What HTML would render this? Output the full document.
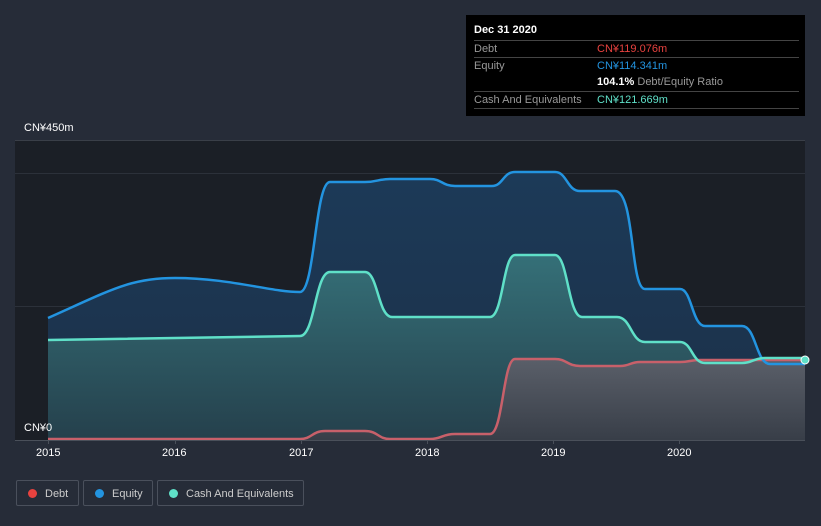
<!DOCTYPE html>
<html><head><meta charset="utf-8"><style>
body{margin:0;background:#262c38;font-family:"Liberation Sans","Noto Sans CJK SC",sans-serif;}
.wrap{position:relative;width:821px;height:526px;overflow:hidden;background:#262c38}
.tip{position:absolute;left:466px;top:15px;width:339px;height:101px;background:#000;color:#fff;font-size:11px}
.tip .r{position:absolute;left:8px;right:6px;border-top:1px solid #444;height:17px;line-height:17px}
.lbl{color:#999}
.v{position:absolute;left:123px;top:0;white-space:nowrap}
.leg{position:absolute;top:480px;height:26px;border:1px solid #4a505c;border-radius:2px;color:#ccc;font-size:11px;line-height:26px;box-sizing:border-box;white-space:nowrap}
.leg i{position:absolute;left:11px;top:8px;width:9px;height:9px;border-radius:50%}
.leg span{position:absolute;left:28px}
.ax{position:absolute;color:#fff;font-size:11px}
</style></head><body><div class="wrap">
<svg width="821" height="526" style="position:absolute;left:0;top:0">
<defs>
<linearGradient id="cg" x1="0" y1="0" x2="0" y2="1"><stop offset="0" stop-color="#357078"/><stop offset="1" stop-color="#25404c"/></linearGradient>
<linearGradient id="dg" x1="0" y1="0" x2="0" y2="1"><stop offset="0" stop-color="#5a5f69"/><stop offset="1" stop-color="#383e48"/></linearGradient>
<linearGradient id="eg" x1="0" y1="0" x2="0" y2="1"><stop offset="0" stop-color="#1c3a58"/><stop offset="1" stop-color="#1c3048"/></linearGradient>
</defs>
<rect x="15" y="140" width="790" height="300" fill="#1b1f26"/>
<line x1="15" y1="140.5" x2="805" y2="140.5" stroke="#3a3f48"/>
<line x1="15" y1="173.5" x2="805" y2="173.5" stroke="#2c313a"/>
<line x1="15" y1="306.5" x2="805" y2="306.5" stroke="#2c313a"/>
<path d="M48,318 C111,290 130,278 175,278 C230,278 270,292 300,292 C315,292 315,182 330,182 L365,182 C378,182 378,179 390,179 L430,179 C442,179 442,186 455,186 L492,186 C503,186 503,172 515,172 L555,172 C567,172 567,191 580,191 L615,191 C635,191 630,289 645,289 L680,289 C692,289 692,326 705,326 L742,326 C756,326 756,364 770,364 L805,364 L805,440 L48,440Z" fill="url(#eg)"/>
<path d="M48,340 L300,336 C315,336 315,272 330,272 L365,272 C378,272 378,317 392,317 L490,317 C503,317 503,255 515,255 L555,255 C568,255 568,317 582,317 L617,317 C631,317 631,342 645,342 L680,342 C692,342 692,363 705,363 L742,363 C753,363 753,358 765,358 L805,358 L805,440 L48,440Z" fill="url(#cg)"/>
<path d="M48,439 L300,439 C312,439 312,431 325,431 L365,431 C378,431 378,439 390,439 L430,439 C442,439 442,434 455,434 L490,434 C503,434 503,359 515,359 L555,359 C567,359 567,366 580,366 L620,366 C630,366 630,362 640,362 L680,362 C690,362 690,360 700,360 L805,360 L805,440 L48,440Z" fill="url(#dg)"/>
<path d="M48,439 L300,439 C312,439 312,431 325,431 L365,431 C378,431 378,439 390,439 L430,439 C442,439 442,434 455,434 L490,434 C503,434 503,359 515,359 L555,359 C567,359 567,366 580,366 L620,366 C630,366 630,362 640,362 L680,362 C690,362 690,360 700,360 L805,360" fill="none" stroke="#c8606a" stroke-width="2.5"/>
<path d="M48,318 C111,290 130,278 175,278 C230,278 270,292 300,292 C315,292 315,182 330,182 L365,182 C378,182 378,179 390,179 L430,179 C442,179 442,186 455,186 L492,186 C503,186 503,172 515,172 L555,172 C567,172 567,191 580,191 L615,191 C635,191 630,289 645,289 L680,289 C692,289 692,326 705,326 L742,326 C756,326 756,364 770,364 L805,364" fill="none" stroke="#2394e0" stroke-width="2.5"/>
<path d="M48,340 L300,336 C315,336 315,272 330,272 L365,272 C378,272 378,317 392,317 L490,317 C503,317 503,255 515,255 L555,255 C568,255 568,317 582,317 L617,317 C631,317 631,342 645,342 L680,342 C692,342 692,363 705,363 L742,363 C753,363 753,358 765,358 L805,358" fill="none" stroke="#5fe0c8" stroke-width="2.5"/>
<circle cx="805" cy="360" r="4" fill="#5fe0c8" stroke="#fff" stroke-width="1"/>
<line x1="15" y1="440.5" x2="805" y2="440.5" stroke="#4a505a"/>
<g stroke="#4a505a"><line x1="48.5" y1="440" x2="48.5" y2="444"/><line x1="175.5" y1="440" x2="175.5" y2="444"/><line x1="301.5" y1="440" x2="301.5" y2="444"/><line x1="427.5" y1="440" x2="427.5" y2="444"/><line x1="553.5" y1="440" x2="553.5" y2="444"/><line x1="679.5" y1="440" x2="679.5" y2="444"/></g>
</svg>
<div class="ax" style="left:24px;top:122px">CN¥450m</div>
<div class="ax" style="left:24px;top:422px">CN¥0</div>
<div class="ax" style="left:36px;top:447px">2015</div>
<div class="ax" style="left:162px;top:447px">2016</div>
<div class="ax" style="left:289px;top:447px">2017</div>
<div class="ax" style="left:415px;top:447px">2018</div>
<div class="ax" style="left:541px;top:447px">2019</div>
<div class="ax" style="left:667px;top:447px">2020</div>
<div class="tip">
<div style="position:absolute;left:8px;top:9px;font-weight:bold">Dec 31 2020</div>
<div class="r" style="top:25px"><span class="lbl">Debt</span><span class="v" style="color:#e8423f">CN¥119.076m</span></div>
<div class="r" style="top:42px"><span class="lbl">Equity</span><span class="v" style="color:#2394e0">CN¥114.341m</span></div>
<div class="r" style="top:59px;border-top:none"><span class="v"><b>104.1%</b> <span class="lbl">Debt/Equity Ratio</span></span></div>
<div class="r" style="top:76px"><span class="lbl">Cash And Equivalents</span><span class="v" style="color:#5fe0c8">CN¥121.669m</span></div>
<div class="r" style="top:93px;height:0"></div>
</div>
<div class="leg" style="left:16px;width:63px"><i style="background:#e8423f"></i><span>Debt</span></div>
<div class="leg" style="left:83px;width:70px"><i style="background:#2394e0"></i><span>Equity</span></div>
<div class="leg" style="left:157px;width:147px"><i style="background:#5fe0c8"></i><span>Cash And Equivalents</span></div>
</div></body></html>
